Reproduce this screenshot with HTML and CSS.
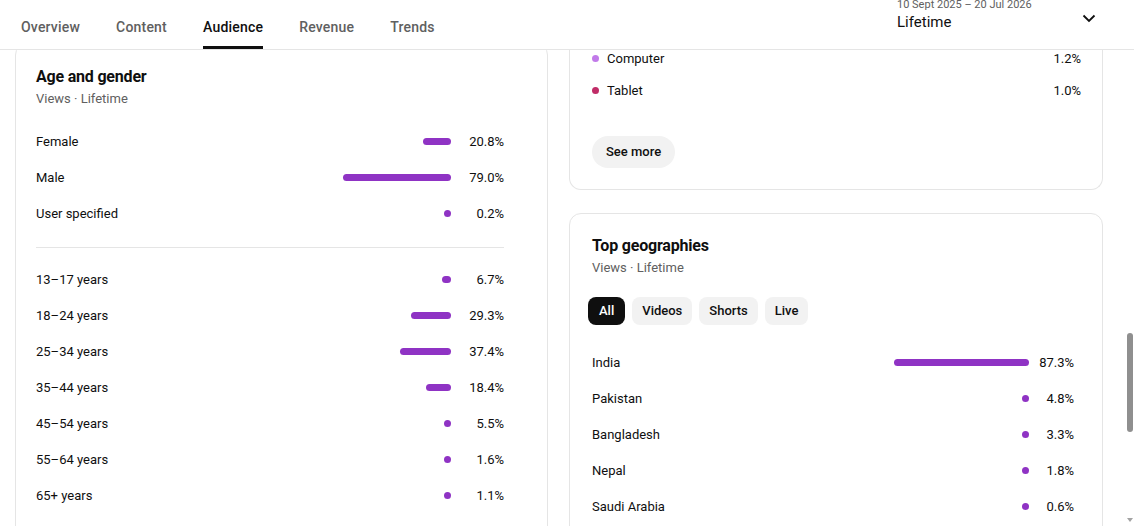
FILE: index.html
```html
<!DOCTYPE html>
<html>
<head>
	<meta charset="utf-8">
	<title>Channel analytics - Audience</title>
	<link rel="stylesheet" href="styles.css">
</head>
<body>
	<div class="header">
		<div class="tabs">
			<div class="tab">Overview</div>
			<div class="tab">Content</div>
			<div class="tab active">Audience</div>
			<div class="tab">Revenue</div>
			<div class="tab">Trends</div>
		</div>
		<div class="period">
			<div class="periodText">
				<div class="periodRange">10 Sept 2025 – 20 Jul 2026</div>
				<div class="periodName">Lifetime</div>
			</div>
			<svg class="chevron" width="24" height="24" viewBox="0 0 24 24">
				<polyline points="6.5,9.5 12,15 17.5,9.5" fill="none" stroke="#0f0f0f" stroke-width="1.8"/>
			</svg>
		</div>
	</div>

	<div class="content">
		<div class="columns">
			<!-- left column -->
			<div class="card ageCard">
				<div class="cardTitle">Age and gender</div>
				<div class="cardSub">Views · Lifetime</div>

				<div class="rows">
					<div class="row"><span class="label">Female</span><span class="track"><span class="bar" style="width:28px"></span></span><span class="value">20.8%</span></div>
					<div class="row"><span class="label">Male</span><span class="track"><span class="bar" style="width:108px"></span></span><span class="value">79.0%</span></div>
					<div class="row"><span class="label">User specified</span><span class="track"><span class="bar dot"></span></span><span class="value">0.2%</span></div>
				</div>

				<div class="divider"></div>

				<div class="rows">
					<div class="row"><span class="label">13–17 years</span><span class="track"><span class="bar" style="width:9px"></span></span><span class="value">6.7%</span></div>
					<div class="row"><span class="label">18–24 years</span><span class="track"><span class="bar" style="width:40px"></span></span><span class="value">29.3%</span></div>
					<div class="row"><span class="label">25–34 years</span><span class="track"><span class="bar" style="width:51px"></span></span><span class="value">37.4%</span></div>
					<div class="row"><span class="label">35–44 years</span><span class="track"><span class="bar" style="width:25px"></span></span><span class="value">18.4%</span></div>
					<div class="row"><span class="label">45–54 years</span><span class="track"><span class="bar dot"></span></span><span class="value">5.5%</span></div>
					<div class="row"><span class="label">55–64 years</span><span class="track"><span class="bar dot"></span></span><span class="value">1.6%</span></div>
					<div class="row"><span class="label">65+ years</span><span class="track"><span class="bar dot"></span></span><span class="value">1.1%</span></div>
				</div>
			</div>

			<!-- right column -->
			<div class="stack">
				<div class="card deviceCard">
					<div class="legendRow"><span class="legendDot computer"></span><span class="label">Computer</span><span class="legendValue">1.2%</span></div>
					<div class="legendRow"><span class="legendDot tablet"></span><span class="label">Tablet</span><span class="legendValue">1.0%</span></div>
					<div class="seeMore">See more</div>
				</div>

				<div class="card geoCard">
					<div class="cardTitle">Top geographies</div>
					<div class="cardSub">Views · Lifetime</div>

					<div class="chips">
						<div class="chip selected">All</div>
						<div class="chip">Videos</div>
						<div class="chip">Shorts</div>
						<div class="chip">Live</div>
					</div>

					<div class="rows">
						<div class="row"><span class="label">India</span><span class="track wide"><span class="bar" style="width:135px"></span></span><span class="value narrow">87.3%</span></div>
						<div class="row"><span class="label">Pakistan</span><span class="track wide"><span class="bar dot"></span></span><span class="value narrow">4.8%</span></div>
						<div class="row"><span class="label">Bangladesh</span><span class="track wide"><span class="bar dot"></span></span><span class="value narrow">3.3%</span></div>
						<div class="row"><span class="label">Nepal</span><span class="track wide"><span class="bar dot"></span></span><span class="value narrow">1.8%</span></div>
						<div class="row"><span class="label">Saudi Arabia</span><span class="track wide"><span class="bar dot"></span></span><span class="value narrow">0.6%</span></div>
					</div>
				</div>
			</div>
		</div>

		<div class="scrollbar">
			<div class="thumb"></div>
			<div class="arrowDown"></div>
		</div>
	</div>
</body>
</html>
```

FILE: styles.css
```css
* {
	box-sizing: border-box;
}

body {
	margin: 0;
	font-family: Roboto, "Liberation Sans", Arial, sans-serif;
	color: #0f0f0f;
	background: #fff;
	overflow: hidden;
}

/* top bar */
.header {
	height: 50px;
	display: flex;
	align-items: flex-start;
	border-bottom: 1px solid #e5e5e5;
	padding-left: 21px;
	padding-right: 33px;
	background: #fff;
}

.tabs {
	display: flex;
	gap: 36px;
}

.tab {
	padding: 17px 0 9px;
	line-height: 20px;
	font-size: 14px;
	font-weight: 500;
	letter-spacing: 0.2px;
	color: #606060;
	border-bottom: 3px solid transparent;
}

.tab.active {
	color: #0f0f0f;
	border-bottom-color: #0f0f0f;
}

.period {
	margin-left: auto;
	display: flex;
	align-items: flex-start;
}

.periodText {
	width: 180px;
	margin-top: -2px;
}

.periodRange {
	font-size: 11px;
	line-height: 13px;
	color: #606060;
}

.periodName {
	font-size: 15px;
	line-height: 20px;
	margin-top: 1px;
}

.chevron {
	display: block;
	margin-top: 6px;
}

/* scrolled area */
.content {
	position: relative;
	height: 476px;
	overflow: hidden;
}

.columns {
	display: grid;
	grid-template-columns: 533px 534px;
	column-gap: 21px;
	align-items: start;
	padding-left: 15px;
	margin-top: -7px;
}

.card {
	background: #fff;
	border: 1px solid #e5e5e5;
	border-radius: 12px;
}

.cardTitle {
	font-size: 16px;
	line-height: 22px;
	font-weight: 700;
	letter-spacing: -0.2px;
}

.cardSub {
	font-size: 13px;
	line-height: 18px;
	margin-top: 2px;
	color: #606060;
}

.ageCard {
	padding: 22px 43px 40px 20px;
}

.ageCard .cardSub + .rows {
	margin-top: 15px;
}

.rows {
	display: flex;
	flex-direction: column;
}

.row {
	height: 36px;
	display: flex;
	align-items: center;
	font-size: 13px;
}

.label {
	flex: 1;
}

.track {
	display: flex;
	justify-content: flex-end;
	width: 140px;
	margin-right: 8px;
}

.track.wide {
	width: 160px;
}

.bar {
	display: block;
	height: 7px;
	min-width: 7px;
	border-radius: 4px;
	background: #8f33c4;
}

.bar.dot {
	width: 7px;
}

.value {
	width: 45px;
	text-align: right;
}

.value.narrow {
	width: 37px;
}

.divider {
	height: 1px;
	background: #e5e5e5;
	margin: 16px 0 13px;
}

.stack {
	display: flex;
	flex-direction: column;
	gap: 23px;
}

/* device card is scrolled past its top */
.deviceCard {
	border-top: none;
	border-radius: 0 0 12px 12px;
	margin-top: -1px;
	padding: 0 21px 21px 22px;
}

.legendRow {
	height: 32px;
	display: flex;
	align-items: center;
	font-size: 13px;
}

.legendDot {
	width: 7px;
	height: 7px;
	border-radius: 50%;
	margin-right: 8px;
}

.legendDot.computer {
	background: #c17ae9;
}

.legendDot.tablet {
	background: #c02c67;
}

.legendValue {
	text-align: right;
}

.seeMore {
	display: inline-block;
	margin-top: 30px;
	height: 32px;
	line-height: 32px;
	padding: 0 14px;
	border-radius: 16px;
	background: #f2f2f2;
	font-size: 13px;
	font-weight: 500;
}

.geoCard {
	padding: 21px 28px 40px 22px;
}

.chips {
	display: flex;
	gap: 7px;
	margin: 20px 0 19px -4px;
}

.chip {
	height: 28px;
	line-height: 28px;
	padding: 0 10px;
	border-radius: 8px;
	background: #f2f2f2;
	font-size: 13px;
	font-weight: 500;
}

.chip.selected {
	background: #0f0f0f;
	color: #fff;
	padding: 0 11px;
}

/* overlay scrollbar on the right edge */
.scrollbar {
	position: absolute;
	top: 0;
	right: 0;
	bottom: 0;
	width: 8px;
}

.thumb {
	position: absolute;
	top: 283px;
	right: 1px;
	width: 6px;
	height: 99px;
	border-radius: 3px;
	background: #8f8f8f;
}

.arrowDown {
	position: absolute;
	bottom: 4px;
	right: 1px;
	width: 0;
	height: 0;
	border-left: 3px solid transparent;
	border-right: 3px solid transparent;
	border-top: 4px solid #a3a3a3;
}
```
